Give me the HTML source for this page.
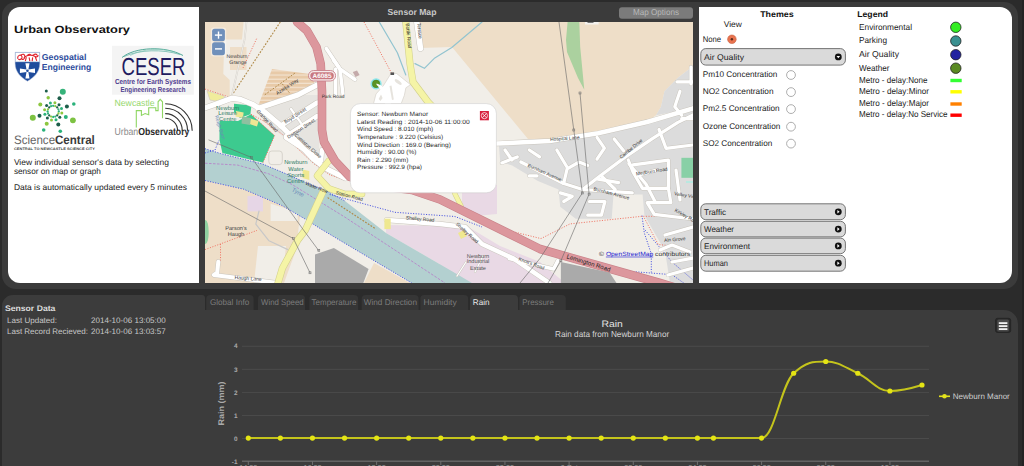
<!DOCTYPE html>
<html><head><meta charset="utf-8"><title>Urban Observatory</title>
<style>
html,body{margin:0;padding:0;background:#2b2b2b;overflow:hidden;width:1024px;height:466px}
svg{display:block;font-family:"Liberation Sans",sans-serif;text-rendering:geometricPrecision}
</style></head><body>
<svg width="1024" height="466" viewBox="0 0 1024 466">
<rect x="0" y="0" width="1024" height="466" fill="#2b2b2b"/>
<rect x="2" y="2" width="1016" height="287" rx="14" fill="#3b3b3b"/>
<path d="M20 7 H199 V283 H20 A12 12 0 0 1 8 271 V19 A12 12 0 0 1 20 7 Z" fill="#fff"/>
<path d="M699 7 H1000 A12 12 0 0 1 1012 19 V271 A12 12 0 0 1 1000 283 H699 Z" fill="#fff"/>
<path d="M13 295 H202 A3 3 0 0 1 205 298 V310 H1004 A14 14 0 0 1 1018 324 V466 H2 V306 A11 11 0 0 1 13 295 Z" fill="#3c3c3c"/>
<rect x="1022" y="0" width="2" height="466" fill="#232323"/>
<text x="14.0" y="32.7" font-size="10.47" fill="#111" font-weight="bold" textLength="116.0" lengthAdjust="spacingAndGlyphs" >Urban Observatory</text>
<text x="13.9" y="164.7" font-size="8.28" fill="#222" textLength="155.0" lengthAdjust="spacingAndGlyphs" >View individual sensor&#x27;s data by selecting</text>
<text x="13.9" y="173.7" font-size="8.28" fill="#222" textLength="86.9" lengthAdjust="spacingAndGlyphs" >sensor on map or graph</text>
<text x="13.9" y="189.6" font-size="8.28" fill="#222" textLength="173.0" lengthAdjust="spacingAndGlyphs" >Data is automatically updated every 5 minutes</text>
<path d="M15.1 52.3 H39.8 V63.5 C39.8 72 34 77.5 27.45 81.2 C21 77.5 15.1 72 15.1 63.5 Z" fill="#1f4c9c" stroke="#b8c4dc" stroke-width="0.5"/>
<rect x="15.4" y="52.6" width="24.1" height="9.2" fill="#ffffff"/>
<path d="M17.6 58.2 C17.6 54.8 21.2 54.2 22 56.6 C22.5 58.6 20.2 60.2 18.6 59.2 M20.8 55.2 C22.8 53.6 25.2 54 24.8 57 C24.4 59.6 22.2 60.2 21.6 58.6 M24.2 57.4 C27.4 54.6 32 54.8 35.2 56.4 C36.6 57.2 37.6 56.8 38.2 55.8 M26.2 57.6 L25.4 60.8 M29.2 57.8 L29.8 60.8 M32.6 57.8 L32.2 60.8 M35.4 57.2 L36.6 60.4 M33.2 55.4 C34.2 53.8 36.2 53.6 37.2 55.2 M27.4 55.6 C28.2 54 30 53.8 31 55" fill="none" stroke="#e0242f" stroke-width="1.15" stroke-linecap="round"/>
<rect x="15.4" y="61.6" width="24.1" height="0.5" fill="#d0d8e8"/>
<path d="M25.4 63.2 H29.5 L28.4 69.4 L35.0 68.4 V73.0 L28.4 72.0 L29.5 78.6 H25.4 L26.5 72.0 L19.9 73.0 V68.4 L26.5 69.4 Z" fill="#ffffff"/>
<circle cx="27.45" cy="70.7" r="1.3" fill="#1f4c9c"/>
<text x="41.8" y="60.0" font-size="8.72" fill="#2d4c9c" font-weight="bold" textLength="44.6" lengthAdjust="spacingAndGlyphs" >Geospatial</text>
<text x="41.8" y="69.8" font-size="8.72" fill="#2d4c9c" font-weight="bold" textLength="49.5" lengthAdjust="spacingAndGlyphs" >Engineering</text>
<rect x="112" y="45.8" width="81.8" height="48.9" fill="#f4f4f4"/>
<path d="M122 57.5 C135 47 165 45.5 183 55.5" fill="none" stroke="#3f9f8c" stroke-width="0.9"/>
<path d="M124 56.5 C140 49.5 162 49 180 54.5" fill="none" stroke="#5ab0a0" stroke-width="0.7"/>
<path d="M130 55.5 C145 48 160 48 175 52" fill="none" stroke="#7cc4b4" stroke-width="0.6"/>
<text x="121.5" y="75.4" font-size="24.71" fill="#211b60" textLength="63.9" lengthAdjust="spacingAndGlyphs" >CESER</text>
<text x="153.0" y="83.8" font-size="7.27" fill="#4e3a8e" font-weight="bold" text-anchor="middle" textLength="76.0" lengthAdjust="spacingAndGlyphs" >Centre for Earth Systems</text>
<text x="153.0" y="91.5" font-size="7.27" fill="#4e3a8e" font-weight="bold" text-anchor="middle" textLength="65.0" lengthAdjust="spacingAndGlyphs" >Engineering Research</text>
<circle cx="46.3" cy="91.0" r="1.5" fill="#1d5e4a"/>
<circle cx="62.8" cy="91.8" r="3" fill="#36b37a"/>
<circle cx="48.2" cy="97.8" r="1.7" fill="#8cc63f"/>
<circle cx="59.5" cy="98.2" r="2" fill="#1d5e4a"/>
<circle cx="73.8" cy="104.0" r="1.8" fill="#2ab27b"/>
<circle cx="40.3" cy="104.5" r="2" fill="#8cc63f"/>
<circle cx="66.9" cy="106.5" r="2" fill="#1d5e4a"/>
<circle cx="32.8" cy="117.7" r="3" fill="#7dc242"/>
<circle cx="39.5" cy="115.8" r="2" fill="#1d5e4a"/>
<circle cx="65.8" cy="117.0" r="2" fill="#2ab27b"/>
<circle cx="72.9" cy="120.3" r="2.9" fill="#7dc242"/>
<circle cx="46.7" cy="123.7" r="2" fill="#8cc63f"/>
<circle cx="58.3" cy="124.5" r="2" fill="#1d5e4a"/>
<circle cx="43.7" cy="130.0" r="1.8" fill="#2ab27b"/>
<circle cx="60.3" cy="131.2" r="1.8" fill="#2ab27b"/>
<circle cx="58.8" cy="111.4" r="1.15" fill="#2ab27b"/>
<circle cx="58.4" cy="113.5" r="1.15" fill="#8cc63f"/>
<circle cx="57.2" cy="115.4" r="1.15" fill="#1d5e4a"/>
<circle cx="55.3" cy="116.6" r="1.15" fill="#36b37a"/>
<circle cx="53.2" cy="117.0" r="1.15" fill="#2ab27b"/>
<circle cx="51.1" cy="116.6" r="1.15" fill="#8cc63f"/>
<circle cx="49.2" cy="115.4" r="1.15" fill="#1d5e4a"/>
<circle cx="48.0" cy="113.5" r="1.15" fill="#36b37a"/>
<circle cx="47.6" cy="111.4" r="1.15" fill="#2ab27b"/>
<circle cx="48.0" cy="109.3" r="1.15" fill="#8cc63f"/>
<circle cx="49.2" cy="107.4" r="1.15" fill="#1d5e4a"/>
<circle cx="51.1" cy="106.2" r="1.15" fill="#36b37a"/>
<circle cx="53.2" cy="105.8" r="1.15" fill="#2ab27b"/>
<circle cx="55.3" cy="106.2" r="1.15" fill="#8cc63f"/>
<circle cx="57.2" cy="107.4" r="1.15" fill="#1d5e4a"/>
<circle cx="58.4" cy="109.3" r="1.15" fill="#36b37a"/>
<circle cx="61.8" cy="113.1" r="1.5" fill="#8cc63f"/>
<circle cx="59.8" cy="117.2" r="1.5" fill="#1d5e4a"/>
<circle cx="56.0" cy="119.7" r="1.5" fill="#2ab27b"/>
<circle cx="51.5" cy="120.0" r="1.5" fill="#8cc63f"/>
<circle cx="47.4" cy="118.0" r="1.5" fill="#1d5e4a"/>
<circle cx="44.9" cy="114.2" r="1.5" fill="#2ab27b"/>
<circle cx="44.6" cy="109.7" r="1.5" fill="#8cc63f"/>
<circle cx="46.6" cy="105.6" r="1.5" fill="#1d5e4a"/>
<circle cx="50.4" cy="103.1" r="1.5" fill="#2ab27b"/>
<circle cx="54.9" cy="102.8" r="1.5" fill="#8cc63f"/>
<circle cx="59.0" cy="104.8" r="1.5" fill="#1d5e4a"/>
<circle cx="61.5" cy="108.6" r="1.5" fill="#2ab27b"/>
<text x="14" y="144.3" font-size="12.3" fill="#555" textLength="80.8" lengthAdjust="spacingAndGlyphs"><tspan font-weight="normal" fill="#666">Science</tspan><tspan font-weight="bold" fill="#3a3a3a">Central</tspan></text>
<text x="14.0" y="149.6" font-size="3.49" fill="#444" font-weight="bold" textLength="80.8" lengthAdjust="spacingAndGlyphs" >CENTRAL TO NEWCASTLE SCIENCE CITY</text>
<text x="114.5" y="105.6" font-size="9.01" fill="#96d86e" textLength="40.1" lengthAdjust="spacingAndGlyphs" >Newcastle</text>
<polyline points="136.3,127.5 136.3,110.6 141.4,110.6 141.4,115.4 145.1,113.6 148.7,114.8 148.7,107.7 155.8,107.7 155.8,110.6 158.1,110.6 158.1,101.8 160.2,99.4 162.5,101.8 162.5,118.3" fill="none" stroke="#8fd663" stroke-width="1.1"/>
<path d="M165.2 118.3 A12.4 12.4 0 0 1 177.6 130.7" fill="none" stroke="#333" stroke-width="1.1"/>
<path d="M165.2 113.6 A17.1 17.1 0 0 1 182.3 130.7" fill="none" stroke="#333" stroke-width="1.1"/>
<path d="M165.2 108.3 A22.4 22.4 0 0 1 187.6 130.7" fill="none" stroke="#333" stroke-width="1.1"/>
<path d="M165.2 103.7 A27.0 27.0 0 0 1 192.2 130.7" fill="none" stroke="#333" stroke-width="1.1"/>
<text x="114.5" y="134.8" font-size="10.2" fill="#444" textLength="74.9" lengthAdjust="spacingAndGlyphs"><tspan fill="#8a8a8a">Urban</tspan><tspan font-weight="bold" fill="#2a2a2a">Observatory</tspan></text>
<text x="387.6" y="14.5" font-size="8.72" fill="#c8c8c8" font-weight="bold" textLength="48.8" lengthAdjust="spacingAndGlyphs" >Sensor Map</text>
<rect x="619" y="7.3" width="74" height="11.5" rx="3" fill="#7b7b7b"/>
<text x="633.0" y="14.5" font-size="8.58" fill="#b8b8b8" textLength="46.0" lengthAdjust="spacingAndGlyphs" >Map Options</text>
<defs><clipPath id="mapclip"><rect x="205" y="22" width="488" height="261"/></clipPath><pattern id="hatch" patternUnits="userSpaceOnUse" width="6" height="4.2"><rect width="6" height="4.2" fill="#e8caa8"/><rect y="3.0" width="6" height="1.2" fill="#f2e2cf"/></pattern></defs>
<g clip-path="url(#mapclip)">
<rect x="205" y="22" width="488" height="261" fill="#f1eee8"/>
<polygon points="205.0,22.0 243.6,22.0 242.0,39.4 224.3,39.4 223.3,74.0 229.7,80.0 229.7,97.2 205.0,89.1" fill="#eedec8" />
<polygon points="230.0,47.0 246.5,47.0 246.5,70.0 230.0,70.0" fill="#eedec8" />
<polygon points="420.0,22.0 693.0,22.0 693.0,66.3 678.2,77.5 664.5,91.2 661.0,106.7 656.0,115.2 647.0,122.0 598.0,133.3 546.0,141.0 528.0,139.0 452.0,47.0 420.0,48.0" fill="#eedec8" />
<polygon points="205.0,180.5 243.6,189.2 282.2,205.6 300.0,216.0 296.0,250.0 284.0,283.0 205.0,283.0" fill="#eedec8" />
<polygon points="258.0,246.0 286.0,246.0 282.0,283.0 254.0,283.0" fill="#f1eee8" />
<polygon points="270.6,203.7 297.7,212.0 297.7,221.0 270.6,221.0" fill="#f1eee8" />
<polygon points="374.0,263.0 410.0,283.0 364.0,283.0" fill="#eedec8" />
<polygon points="499.0,146.0 546.0,143.0 598.0,135.0 648.0,124.0 693.0,110.0 693.0,283.0 670.0,283.0 665.0,251.0 644.4,215.2 642.6,194.6 613.5,194.6 611.7,218.7 575.7,218.7 560.2,206.7 558.5,189.5 537.9,180.9 512.2,165.5 500.2,162.0" fill="#dcdcdc" />
<polygon points="693.0,66.3 678.2,77.5 664.5,91.2 661.0,106.7 656.0,115.2 693.0,108.0" fill="#dcdcdc" />
<polygon points="257.0,109.0 297.0,95.0 319.0,95.0 319.0,160.0 306.0,150.0 286.0,139.0 270.0,126.0" fill="#e6e4e0" />
<polygon points="462.0,185.0 497.0,185.0 497.0,214.0 475.0,216.0 462.0,212.0" fill="#e9d9e5" />
<polygon points="440.0,222.0 470.0,228.0 500.0,246.0 540.0,262.0 565.0,283.0 440.0,283.0" fill="#e9d9e5" />
<polygon points="386.0,225.0 455.0,226.0 455.0,273.0 386.0,233.0" fill="#e9d9e5" />
<polygon points="247.5,196.0 263.0,196.0 263.0,211.4 247.5,211.4" fill="#e6d6e6" />
<polygon points="219.5,121.0 238.0,121.0 251.0,114.3 274.6,135.6 263.0,162.6 222.4,153.0 219.5,140.0" fill="#3dca8f" />
<polygon points="234.0,103.7 251.4,105.5 250.4,114.3 240.0,118.0 234.0,112.0" fill="#3dca8f" />
<polygon points="236.0,111.0 243.6,112.5 243.0,118.0 235.5,116.5" fill="#eee694" />
<polygon points="250.5,118.6 258.6,121.0 257.0,126.6 249.5,124.0" fill="#eee694" />
<polygon points="242.0,116.5 251.0,118.0 250.0,125.0 241.5,123.5" fill="#8fc0a0" />
<polygon points="207.0,90.7 224.3,96.0 224.3,102.5 210.0,100.0" fill="#f0ec9c" stroke="#d8d0c0" stroke-width="0.8"/>
<ellipse cx="205.5" cy="232" rx="3.2" ry="12" fill="#8fd0a0"/>
<polygon points="681.4,157.8 693.0,157.8 693.0,177.8 681.4,177.8" fill="#88d0a6" />
<polygon points="686.0,181.0 693.0,181.0 693.0,183.0 686.0,183.0" fill="#b8e8e0" />
<polygon points="205.0,148.7 220.4,153.5 262.9,164.1 286.0,173.8 305.4,182.5 328.6,192.1 345.0,201.0 386.0,233.0 455.0,273.0 472.0,283.0 411.7,283.0 320.9,229.0 305.4,219.2 282.2,205.6 243.6,189.2 205.0,180.5" fill="#b3d0d0" />
<polyline points="205.0,163.2 237.8,165.1 268.7,173.8 291.9,184.4 345.0,217.2 445.0,283.0" fill="none" stroke="#b585c8" stroke-width="0.9" stroke-linejoin="round" stroke-linecap="butt" stroke-dasharray="2.6 1.4"/>
<polyline points="205.0,148.7 220.4,153.5 262.9,164.1 286.0,173.8 305.4,182.5 328.6,192.1 345.0,201.0" fill="none" stroke="#4a55e0" stroke-width="1.0" stroke-linejoin="round" stroke-dasharray="1.1 1.5" stroke-linecap="butt"/>
<polyline points="205.0,180.5 243.6,189.2 282.2,205.6 305.4,219.2 320.9,229.0 411.7,283.0" fill="none" stroke="#4a55e0" stroke-width="1.0" stroke-linejoin="round" stroke-dasharray="1.1 1.5" stroke-linecap="butt"/>
<polyline points="329.7,194.5 394.9,212.3 455.0,216.5 482.0,227.0" fill="none" stroke="#4a55e0" stroke-width="1.0" stroke-linejoin="round" stroke-dasharray="1.1 1.5" stroke-linecap="butt"/>
<polyline points="205.0,153.0 215.0,150.0 219.0,140.0" fill="none" stroke="#4a55e0" stroke-width="1.0" stroke-linejoin="round" stroke-dasharray="1.1 1.5" stroke-linecap="butt"/>
<polyline points="642.0,215.6 644.3,233.0 651.3,253.8 651.3,272.4" fill="none" stroke="#4a55e0" stroke-width="1.0" stroke-linejoin="round" stroke-dasharray="1.1 1.5" stroke-linecap="butt"/>
<polyline points="628.0,271.2 672.0,274.7 683.7,283.0" fill="none" stroke="#4a55e0" stroke-width="1.0" stroke-linejoin="round" stroke-dasharray="1.1 1.5" stroke-linecap="butt"/>
<polyline points="645.0,230.0 672.0,262.0 693.0,280.0" fill="none" stroke="#4a55e0" stroke-width="1.0" stroke-linejoin="round" stroke-dasharray="1.1 1.5" stroke-linecap="butt"/>
<polyline points="256.6,38.7 243.0,68.0" fill="none" stroke="#f07a6a" stroke-width="1.0" stroke-linejoin="round" stroke-dasharray="1.1 1.5" stroke-linecap="butt"/>
<polyline points="364.0,22.0 391.8,73.6" fill="none" stroke="#f07a6a" stroke-width="1.0" stroke-linejoin="round" stroke-dasharray="1.1 1.5" stroke-linecap="butt"/>
<polyline points="205.0,89.1 229.7,97.2" fill="none" stroke="#f07a6a" stroke-width="1.0" stroke-linejoin="round" stroke-dasharray="1.1 1.5" stroke-linecap="butt"/>
<polyline points="251.0,114.3 262.0,120.0 282.0,134.0 313.0,163.0 330.0,175.0 345.0,180.0" fill="none" stroke="#f07a6a" stroke-width="1.0" stroke-linejoin="round" stroke-dasharray="1.1 1.5" stroke-linecap="butt"/>
<polyline points="263.0,162.6 274.6,135.6 251.0,114.3" fill="none" stroke="#f07a6a" stroke-width="1.0" stroke-linejoin="round" stroke-dasharray="1.1 1.5" stroke-linecap="butt"/>
<polyline points="205.0,249.6 257.0,230.4" fill="none" stroke="#f07a6a" stroke-width="1.0" stroke-linejoin="round" stroke-dasharray="1.1 1.5" stroke-linecap="butt"/>
<polyline points="220.5,244.0 220.5,261.8" fill="none" stroke="#f07a6a" stroke-width="1.0" stroke-linejoin="round" stroke-dasharray="1.1 1.5" stroke-linecap="butt"/>
<polyline points="461.0,208.0 503.0,229.2 541.0,238.6 570.0,223.9 642.0,216.3 669.8,216.3" fill="none" stroke="#f07a6a" stroke-width="1.0" stroke-linejoin="round" stroke-dasharray="1.1 1.5" stroke-linecap="butt"/>
<polyline points="644.3,217.9 658.2,244.5 669.8,245.7" fill="none" stroke="#f07a6a" stroke-width="1.0" stroke-linejoin="round" stroke-dasharray="1.1 1.5" stroke-linecap="butt"/>
<polyline points="280.3,22.0 231.5,95.9" fill="none" stroke="#b08a4a" stroke-width="1.1" stroke-linejoin="round" stroke-linecap="butt" stroke-dasharray="1.8 1.4"/>
<polyline points="327.6,197.6 376.0,229.0" fill="none" stroke="#b08a4a" stroke-width="1.1" stroke-linejoin="round" stroke-linecap="butt" stroke-dasharray="1.8 1.4"/>
<polygon points="272.0,69.0 310.0,74.0 316.0,86.0 270.0,103.0 257.0,109.0" fill="url(#hatch)" />
<polyline points="294.8,73.2 263.9,95.4" fill="none" stroke="#b08a4a" stroke-width="1.0" stroke-linejoin="round" stroke-linecap="butt" stroke-dasharray="1.8 1.4"/>
<polyline points="282.2,83.8 290.0,93.5" fill="none" stroke="#b08a4a" stroke-width="1.0" stroke-linejoin="round" stroke-linecap="butt" stroke-dasharray="1.8 1.4"/>
<polyline points="482.0,22.0 451.8,47.5 434.8,57.9 424.4,68.3 415.0,63.6" fill="none" stroke="#92c4d0" stroke-width="1.2" stroke-linejoin="round" stroke-linecap="round" />
<polyline points="379.3,22.0 397.4,52.7 405.8,75.0" fill="none" stroke="#92c4d0" stroke-width="1.2" stroke-linejoin="round" stroke-linecap="round" />
<polyline points="246.5,22.0 244.6,39.4 232.0,95.0" fill="none" stroke="#d0ccc4" stroke-width="1.6" stroke-linejoin="round" stroke-linecap="round" />
<polyline points="246.5,22.0 244.6,39.4 232.0,95.0" fill="none" stroke="#f6f4f0" stroke-width="0.8" stroke-linejoin="round" stroke-linecap="round" />
<polyline points="259.0,211.0 255.8,224.2 269.0,240.8 287.9,249.6" fill="none" stroke="#c8c8c8" stroke-width="1.2" stroke-linejoin="round" stroke-linecap="round" />
<rect x="268.8" y="151" width="13.5" height="13.6" rx="3" fill="none" stroke="#d4d0c8" stroke-width="0.9"/>
<polyline points="205.0,107.9 219.0,103.0 231.8,98.2 240.4,99.3 253.3,104.7 265.0,112.2 282.3,127.0 300.0,145.0 313.0,158.8 325.0,168.0 345.0,178.0" fill="none" stroke="#c9c5bd" stroke-width="6.1000000000000005" stroke-linejoin="round" stroke-linecap="round" />
<polyline points="258.0,108.4 297.8,95.0 317.0,85.0" fill="none" stroke="#c9c5bd" stroke-width="6.1000000000000005" stroke-linejoin="round" stroke-linecap="round" />
<polyline points="280.4,126.0 317.0,102.7" fill="none" stroke="#c9c5bd" stroke-width="5.7" stroke-linejoin="round" stroke-linecap="round" />
<polyline points="286.0,136.5 317.0,116.3" fill="none" stroke="#c9c5bd" stroke-width="5.7" stroke-linejoin="round" stroke-linecap="round" />
<polyline points="291.0,109.0 296.0,116.0 301.0,123.0" fill="none" stroke="#c9c5bd" stroke-width="3.1" stroke-linejoin="round" stroke-linecap="round" />
<polyline points="286.0,137.5 321.0,160.7 322.0,150.0" fill="none" stroke="#c9c5bd" stroke-width="5.5" stroke-linejoin="round" stroke-linecap="round" />
<polyline points="326.3,48.5 340.0,69.0 355.0,79.5" fill="none" stroke="#c9c5bd" stroke-width="4.5" stroke-linejoin="round" stroke-linecap="round" />
<polyline points="335.6,69.0 335.6,94.6" fill="none" stroke="#c9c5bd" stroke-width="4.3" stroke-linejoin="round" stroke-linecap="round" />
<polyline points="340.0,69.0 343.0,94.6" fill="none" stroke="#c9c5bd" stroke-width="4.3" stroke-linejoin="round" stroke-linecap="round" />
<polyline points="333.3,60.0 340.0,69.0" fill="none" stroke="#c9c5bd" stroke-width="4.3" stroke-linejoin="round" stroke-linecap="round" />
<polyline points="416.5,20.0 420.5,48.5" fill="none" stroke="#c9c5bd" stroke-width="6.4" stroke-linejoin="round" stroke-linecap="round" />
<polyline points="496.8,143.6 549.7,141.0 598.0,133.3 647.0,122.0 693.0,108.4" fill="none" stroke="#c9c5bd" stroke-width="5.4" stroke-linejoin="round" stroke-linecap="round" />
<polyline points="386.5,220.0 440.0,224.0 465.2,227.0 482.0,244.0 513.6,258.6 549.4,283.0" fill="none" stroke="#c9c5bd" stroke-width="5.4" stroke-linejoin="round" stroke-linecap="round" />
<polyline points="218.3,261.8 217.2,272.8 213.8,275.0 278.0,283.0" fill="none" stroke="#c9c5bd" stroke-width="4.9" stroke-linejoin="round" stroke-linecap="round" />
<polyline points="509.4,258.6 553.6,269.0 557.8,260.7" fill="none" stroke="#c9c5bd" stroke-width="4.4" stroke-linejoin="round" stroke-linecap="round" />
<polyline points="483.0,256.0 475.0,272.0" fill="none" stroke="#c9c5bd" stroke-width="2.1" stroke-linejoin="round" stroke-linecap="round" />
<polyline points="466.0,262.0 457.0,276.0" fill="none" stroke="#c9c5bd" stroke-width="2.1" stroke-linejoin="round" stroke-linecap="round" />
<polyline points="501.9,162.9 517.3,156.9" fill="none" stroke="#c9c5bd" stroke-width="4.1000000000000005" stroke-linejoin="round" stroke-linecap="round" />
<polyline points="520.8,162.0 563.7,183.5 582.6,189.5 632.3,192.9" fill="none" stroke="#c9c5bd" stroke-width="4.1000000000000005" stroke-linejoin="round" stroke-linecap="round" />
<polyline points="563.7,183.5 567.1,168.9 579.1,162.0 587.7,165.5" fill="none" stroke="#c9c5bd" stroke-width="4.1000000000000005" stroke-linejoin="round" stroke-linecap="round" />
<polyline points="582.6,189.5 598.0,177.5 625.5,156.9 652.0,138.9 677.9,122.4 693.0,115.0" fill="none" stroke="#c9c5bd" stroke-width="4.1000000000000005" stroke-linejoin="round" stroke-linecap="round" />
<polyline points="560.2,192.9 572.3,196.4 563.7,201.5" fill="none" stroke="#c9c5bd" stroke-width="4.1000000000000005" stroke-linejoin="round" stroke-linecap="round" />
<polyline points="589.4,201.5 604.9,201.5 601.4,215.2 587.7,215.2" fill="none" stroke="#c9c5bd" stroke-width="4.1000000000000005" stroke-linejoin="round" stroke-linecap="round" />
<polyline points="598.0,179.2 618.6,182.6" fill="none" stroke="#c9c5bd" stroke-width="4.1000000000000005" stroke-linejoin="round" stroke-linecap="round" />
<polyline points="601.4,175.8 615.2,189.5" fill="none" stroke="#c9c5bd" stroke-width="4.1000000000000005" stroke-linejoin="round" stroke-linecap="round" />
<polyline points="529.3,150.0 539.6,156.9" fill="none" stroke="#c9c5bd" stroke-width="4.1000000000000005" stroke-linejoin="round" stroke-linecap="round" />
<polyline points="556.8,150.0 567.1,167.2" fill="none" stroke="#c9c5bd" stroke-width="4.1000000000000005" stroke-linejoin="round" stroke-linecap="round" />
<polyline points="529.3,175.8 537.0,175.8" fill="none" stroke="#c9c5bd" stroke-width="4.1000000000000005" stroke-linejoin="round" stroke-linecap="round" />
<polyline points="505.0,150.0 512.0,160.0" fill="none" stroke="#c9c5bd" stroke-width="4.1000000000000005" stroke-linejoin="round" stroke-linecap="round" />
<polyline points="597.0,137.3 604.4,148.2 597.0,159.2" fill="none" stroke="#c9c5bd" stroke-width="4.1000000000000005" stroke-linejoin="round" stroke-linecap="round" />
<polyline points="628.9,163.7 646.1,184.3 655.0,201.5" fill="none" stroke="#c9c5bd" stroke-width="4.1000000000000005" stroke-linejoin="round" stroke-linecap="round" />
<polyline points="635.8,175.8 655.0,170.6" fill="none" stroke="#c9c5bd" stroke-width="4.1000000000000005" stroke-linejoin="round" stroke-linecap="round" />
<polyline points="628.3,160.0 633.0,172.0 642.5,188.4 668.4,188.4 668.4,160.1 633.0,164.8" fill="none" stroke="#c9c5bd" stroke-width="4.1000000000000005" stroke-linejoin="round" stroke-linecap="round" />
<polyline points="668.4,188.4 670.8,202.6 647.2,202.6 654.3,214.4 693.0,219.0" fill="none" stroke="#c9c5bd" stroke-width="4.1000000000000005" stroke-linejoin="round" stroke-linecap="round" />
<polyline points="659.0,129.4 666.0,148.3 693.0,145.0" fill="none" stroke="#c9c5bd" stroke-width="4.1000000000000005" stroke-linejoin="round" stroke-linecap="round" />
<polyline points="614.2,138.9 623.6,150.7" fill="none" stroke="#c9c5bd" stroke-width="4.1000000000000005" stroke-linejoin="round" stroke-linecap="round" />
<polyline points="691.0,67.0 691.0,84.0" fill="none" stroke="#c9c5bd" stroke-width="4.1000000000000005" stroke-linejoin="round" stroke-linecap="round" />
<polyline points="677.0,81.8 693.0,81.8" fill="none" stroke="#c9c5bd" stroke-width="4.1000000000000005" stroke-linejoin="round" stroke-linecap="round" />
<polyline points="680.0,91.2 676.5,101.5 674.8,106.7 681.7,115.2" fill="none" stroke="#c9c5bd" stroke-width="4.1000000000000005" stroke-linejoin="round" stroke-linecap="round" />
<polyline points="681.7,118.7 693.0,118.7" fill="none" stroke="#c9c5bd" stroke-width="4.1000000000000005" stroke-linejoin="round" stroke-linecap="round" />
<polyline points="676.0,170.0 680.0,200.0" fill="none" stroke="#c9c5bd" stroke-width="4.1000000000000005" stroke-linejoin="round" stroke-linecap="round" />
<polyline points="665.0,235.0 693.0,227.0" fill="none" stroke="#c9c5bd" stroke-width="4.1000000000000005" stroke-linejoin="round" stroke-linecap="round" />
<polyline points="660.0,250.0 672.0,245.0 690.0,252.0" fill="none" stroke="#c9c5bd" stroke-width="4.1000000000000005" stroke-linejoin="round" stroke-linecap="round" />
<polyline points="672.0,262.0 693.0,258.0" fill="none" stroke="#c9c5bd" stroke-width="4.1000000000000005" stroke-linejoin="round" stroke-linecap="round" />
<polyline points="668.0,275.0 693.0,268.0" fill="none" stroke="#c9c5bd" stroke-width="4.1000000000000005" stroke-linejoin="round" stroke-linecap="round" />
<polyline points="205.0,107.9 219.0,103.0 231.8,98.2 240.4,99.3 253.3,104.7 265.0,112.2 282.3,127.0 300.0,145.0 313.0,158.8 325.0,168.0 345.0,178.0" fill="none" stroke="#ffffff" stroke-width="5.2" stroke-linejoin="round" stroke-linecap="round" />
<polyline points="258.0,108.4 297.8,95.0 317.0,85.0" fill="none" stroke="#ffffff" stroke-width="5.2" stroke-linejoin="round" stroke-linecap="round" />
<polyline points="280.4,126.0 317.0,102.7" fill="none" stroke="#ffffff" stroke-width="4.8" stroke-linejoin="round" stroke-linecap="round" />
<polyline points="286.0,136.5 317.0,116.3" fill="none" stroke="#ffffff" stroke-width="4.8" stroke-linejoin="round" stroke-linecap="round" />
<polyline points="291.0,109.0 296.0,116.0 301.0,123.0" fill="none" stroke="#ffffff" stroke-width="2.2" stroke-linejoin="round" stroke-linecap="round" />
<polyline points="286.0,137.5 321.0,160.7 322.0,150.0" fill="none" stroke="#ffffff" stroke-width="4.6" stroke-linejoin="round" stroke-linecap="round" />
<polyline points="326.3,48.5 340.0,69.0 355.0,79.5" fill="none" stroke="#ffffff" stroke-width="3.6" stroke-linejoin="round" stroke-linecap="round" />
<polyline points="335.6,69.0 335.6,94.6" fill="none" stroke="#ffffff" stroke-width="3.4" stroke-linejoin="round" stroke-linecap="round" />
<polyline points="340.0,69.0 343.0,94.6" fill="none" stroke="#ffffff" stroke-width="3.4" stroke-linejoin="round" stroke-linecap="round" />
<polyline points="333.3,60.0 340.0,69.0" fill="none" stroke="#ffffff" stroke-width="3.4" stroke-linejoin="round" stroke-linecap="round" />
<polyline points="416.5,20.0 420.5,48.5" fill="none" stroke="#ffffff" stroke-width="5.5" stroke-linejoin="round" stroke-linecap="round" />
<polyline points="496.8,143.6 549.7,141.0 598.0,133.3 647.0,122.0 693.0,108.4" fill="none" stroke="#ffffff" stroke-width="4.5" stroke-linejoin="round" stroke-linecap="round" />
<polyline points="386.5,220.0 440.0,224.0 465.2,227.0 482.0,244.0 513.6,258.6 549.4,283.0" fill="none" stroke="#ffffff" stroke-width="4.5" stroke-linejoin="round" stroke-linecap="round" />
<polyline points="218.3,261.8 217.2,272.8 213.8,275.0 278.0,283.0" fill="none" stroke="#ffffff" stroke-width="4.0" stroke-linejoin="round" stroke-linecap="round" />
<polyline points="509.4,258.6 553.6,269.0 557.8,260.7" fill="none" stroke="#ffffff" stroke-width="3.5" stroke-linejoin="round" stroke-linecap="round" />
<polyline points="483.0,256.0 475.0,272.0" fill="none" stroke="#ffffff" stroke-width="1.2" stroke-linejoin="round" stroke-linecap="round" />
<polyline points="466.0,262.0 457.0,276.0" fill="none" stroke="#ffffff" stroke-width="1.2" stroke-linejoin="round" stroke-linecap="round" />
<polyline points="501.9,162.9 517.3,156.9" fill="none" stroke="#ffffff" stroke-width="3.2" stroke-linejoin="round" stroke-linecap="round" />
<polyline points="520.8,162.0 563.7,183.5 582.6,189.5 632.3,192.9" fill="none" stroke="#ffffff" stroke-width="3.2" stroke-linejoin="round" stroke-linecap="round" />
<polyline points="563.7,183.5 567.1,168.9 579.1,162.0 587.7,165.5" fill="none" stroke="#ffffff" stroke-width="3.2" stroke-linejoin="round" stroke-linecap="round" />
<polyline points="582.6,189.5 598.0,177.5 625.5,156.9 652.0,138.9 677.9,122.4 693.0,115.0" fill="none" stroke="#ffffff" stroke-width="3.2" stroke-linejoin="round" stroke-linecap="round" />
<polyline points="560.2,192.9 572.3,196.4 563.7,201.5" fill="none" stroke="#ffffff" stroke-width="3.2" stroke-linejoin="round" stroke-linecap="round" />
<polyline points="589.4,201.5 604.9,201.5 601.4,215.2 587.7,215.2" fill="none" stroke="#ffffff" stroke-width="3.2" stroke-linejoin="round" stroke-linecap="round" />
<polyline points="598.0,179.2 618.6,182.6" fill="none" stroke="#ffffff" stroke-width="3.2" stroke-linejoin="round" stroke-linecap="round" />
<polyline points="601.4,175.8 615.2,189.5" fill="none" stroke="#ffffff" stroke-width="3.2" stroke-linejoin="round" stroke-linecap="round" />
<polyline points="529.3,150.0 539.6,156.9" fill="none" stroke="#ffffff" stroke-width="3.2" stroke-linejoin="round" stroke-linecap="round" />
<polyline points="556.8,150.0 567.1,167.2" fill="none" stroke="#ffffff" stroke-width="3.2" stroke-linejoin="round" stroke-linecap="round" />
<polyline points="529.3,175.8 537.0,175.8" fill="none" stroke="#ffffff" stroke-width="3.2" stroke-linejoin="round" stroke-linecap="round" />
<polyline points="505.0,150.0 512.0,160.0" fill="none" stroke="#ffffff" stroke-width="3.2" stroke-linejoin="round" stroke-linecap="round" />
<polyline points="597.0,137.3 604.4,148.2 597.0,159.2" fill="none" stroke="#ffffff" stroke-width="3.2" stroke-linejoin="round" stroke-linecap="round" />
<polyline points="628.9,163.7 646.1,184.3 655.0,201.5" fill="none" stroke="#ffffff" stroke-width="3.2" stroke-linejoin="round" stroke-linecap="round" />
<polyline points="635.8,175.8 655.0,170.6" fill="none" stroke="#ffffff" stroke-width="3.2" stroke-linejoin="round" stroke-linecap="round" />
<polyline points="628.3,160.0 633.0,172.0 642.5,188.4 668.4,188.4 668.4,160.1 633.0,164.8" fill="none" stroke="#ffffff" stroke-width="3.2" stroke-linejoin="round" stroke-linecap="round" />
<polyline points="668.4,188.4 670.8,202.6 647.2,202.6 654.3,214.4 693.0,219.0" fill="none" stroke="#ffffff" stroke-width="3.2" stroke-linejoin="round" stroke-linecap="round" />
<polyline points="659.0,129.4 666.0,148.3 693.0,145.0" fill="none" stroke="#ffffff" stroke-width="3.2" stroke-linejoin="round" stroke-linecap="round" />
<polyline points="614.2,138.9 623.6,150.7" fill="none" stroke="#ffffff" stroke-width="3.2" stroke-linejoin="round" stroke-linecap="round" />
<polyline points="691.0,67.0 691.0,84.0" fill="none" stroke="#ffffff" stroke-width="3.2" stroke-linejoin="round" stroke-linecap="round" />
<polyline points="677.0,81.8 693.0,81.8" fill="none" stroke="#ffffff" stroke-width="3.2" stroke-linejoin="round" stroke-linecap="round" />
<polyline points="680.0,91.2 676.5,101.5 674.8,106.7 681.7,115.2" fill="none" stroke="#ffffff" stroke-width="3.2" stroke-linejoin="round" stroke-linecap="round" />
<polyline points="681.7,118.7 693.0,118.7" fill="none" stroke="#ffffff" stroke-width="3.2" stroke-linejoin="round" stroke-linecap="round" />
<polyline points="676.0,170.0 680.0,200.0" fill="none" stroke="#ffffff" stroke-width="3.2" stroke-linejoin="round" stroke-linecap="round" />
<polyline points="665.0,235.0 693.0,227.0" fill="none" stroke="#ffffff" stroke-width="3.2" stroke-linejoin="round" stroke-linecap="round" />
<polyline points="660.0,250.0 672.0,245.0 690.0,252.0" fill="none" stroke="#ffffff" stroke-width="3.2" stroke-linejoin="round" stroke-linecap="round" />
<polyline points="672.0,262.0 693.0,258.0" fill="none" stroke="#ffffff" stroke-width="3.2" stroke-linejoin="round" stroke-linecap="round" />
<polyline points="668.0,275.0 693.0,268.0" fill="none" stroke="#ffffff" stroke-width="3.2" stroke-linejoin="round" stroke-linecap="round" />
<polygon points="391.2,73.1 396.6,73.5 410.5,84.7 405.9,87.8 404.3,95.5 401.2,103.6 373.5,103.6 376.0,94.0 383.5,85.5" fill="#ffffff" stroke="#d2cdc5" stroke-width="0.6"/>
<ellipse cx="398.2" cy="82" rx="4.2" ry="1.6" transform="rotate(38 398.2 82)" fill="#e6e3dd"/>
<polygon points="389.5,86.0 391.5,85.5 393.8,99.5 392.0,100.0" fill="#e6e3dd" />
<polygon points="378.6,99.0 381.0,94.5 382.6,98.0 380.5,101.0" fill="#e6e3dd" />
<rect x="390.5" y="72.4" width="3.6" height="2.6" fill="#555"/>
<polyline points="405.8,22.0 410.0,63.8 413.0,82.0 428.0,102.0 450.0,125.0 470.0,150.0" fill="none" stroke="#d2d08c" stroke-width="7.1" stroke-linejoin="round" stroke-linecap="round" />
<polyline points="405.8,22.0 410.0,63.8 413.0,82.0 428.0,102.0 450.0,125.0 470.0,150.0" fill="none" stroke="#f5f4a6" stroke-width="6" stroke-linejoin="round" stroke-linecap="round" />
<polyline points="328.6,161.0 317.0,175.7 328.6,188.3 345.0,194.0 362.0,194.0" fill="none" stroke="#d2d08c" stroke-width="6.6" stroke-linejoin="round" stroke-linecap="round" />
<polyline points="328.6,161.0 317.0,175.7 328.6,188.3 345.0,194.0 362.0,194.0" fill="none" stroke="#f5f4a6" stroke-width="5.5" stroke-linejoin="round" stroke-linecap="round" />
<polyline points="322.8,192.1 305.4,230.0 297.8,240.0 282.3,268.4 278.0,283.0" fill="none" stroke="#d2d08c" stroke-width="7.1" stroke-linejoin="round" stroke-linecap="round" />
<polyline points="322.8,192.1 305.4,230.0 297.8,240.0 282.3,268.4 278.0,283.0" fill="none" stroke="#f5f4a6" stroke-width="6" stroke-linejoin="round" stroke-linecap="round" />
<polyline points="454.7,193.4 461.0,206.0" fill="none" stroke="#d2d08c" stroke-width="5.1" stroke-linejoin="round" stroke-linecap="round" />
<polyline points="454.7,193.4 461.0,206.0" fill="none" stroke="#f5f4a6" stroke-width="4" stroke-linejoin="round" stroke-linecap="round" />
<polygon points="302.6,169.4 309.3,171.0 309.3,180.0 302.6,178.0" fill="#efe890" />
<polygon points="384.4,218.6 390.7,218.6 390.7,229.1 384.4,229.1" fill="#efe890" />
<polygon points="458.0,233.0 464.0,230.0 467.0,236.0 461.0,239.0" fill="#efe890" />
<polyline points="297.0,22.0 306.8,30.4 316.5,47.1 320.7,63.8 322.0,91.7 322.0,130.0 324.0,142.0 335.0,161.0 350.0,177.0 380.0,186.0 412.0,190.0 440.0,199.5 540.0,249.0 660.0,283.0 700.0,295.0" fill="none" stroke="#c98289" stroke-width="8.6" stroke-linejoin="round" stroke-linecap="round" />
<polyline points="297.0,22.0 306.8,30.4 316.5,47.1 320.7,63.8 322.0,91.7 322.0,130.0 324.0,142.0 335.0,161.0 350.0,177.0 380.0,186.0 412.0,190.0 440.0,199.5 540.0,249.0 660.0,283.0 700.0,295.0" fill="none" stroke="#dc979d" stroke-width="7.4" stroke-linejoin="round" stroke-linecap="round" />
<polygon points="352.8,72.0 357.0,70.5 359.6,75.0 355.5,77.0" fill="#c4aaaa" />
<polygon points="315.0,254.4 333.9,248.0 368.6,269.0 363.3,283.0 315.0,283.0" fill="#aaaaaa" />
<polygon points="560.9,262.0 609.5,272.4 616.5,283.0 560.9,283.0" fill="#aaaaaa" />
<polygon points="567.6,22.0 579.3,22.0 580.2,47.0 584.3,89.8 578.0,78.0 567.0,52.0 566.0,40.0" fill="#abd19f" />
<rect x="585" y="21" width="13.6" height="3.5" fill="#f4f2ee"/><rect x="587.5" y="21" width="6" height="2" fill="#777"/>
<polyline points="208.9,140.0 251.3,157.4 303.5,230.0 318.8,250.7" fill="none" stroke="#666666" stroke-width="0.6" stroke-linejoin="round" stroke-linecap="round" />
<polyline points="205.0,191.0 293.4,238.6 310.0,272.8" fill="none" stroke="#666666" stroke-width="0.6" stroke-linejoin="round" stroke-linecap="round" />
<polyline points="559.0,22.0 573.8,130.0 582.4,193.0 540.0,258.4 520.0,283.0" fill="none" stroke="#666666" stroke-width="0.6" stroke-linejoin="round" stroke-linecap="round" />
<polyline points="580.0,93.0 589.1,194.1 560.9,260.8 548.0,283.0" fill="none" stroke="#666666" stroke-width="0.6" stroke-linejoin="round" stroke-linecap="round" />
<rect x="250.3" y="156.4" width="2" height="2" fill="none" stroke="#666" stroke-width="0.5"/>
<rect x="292.4" y="237.6" width="2" height="2" fill="none" stroke="#666" stroke-width="0.5"/>
<rect x="309" y="271.8" width="2" height="2" fill="none" stroke="#666" stroke-width="0.5"/>
<rect x="317.8" y="249.7" width="2" height="2" fill="none" stroke="#666" stroke-width="0.5"/>
<rect x="572.8" y="129" width="2" height="2" fill="none" stroke="#666" stroke-width="0.5"/>
<rect x="581.4" y="192" width="2" height="2" fill="none" stroke="#666" stroke-width="0.5"/>
<rect x="588.1" y="193.1" width="2" height="2" fill="none" stroke="#666" stroke-width="0.5"/>
<rect x="579" y="92" width="2" height="2" fill="none" stroke="#666" stroke-width="0.5"/>
<rect x="559.9" y="259.8" width="2" height="2" fill="none" stroke="#666" stroke-width="0.5"/>
<text x="237" y="58" font-size="5.2" fill="#444" text-anchor="middle">Newburn</text>
<text x="238" y="64" font-size="5.2" fill="#444" text-anchor="middle">Grange</text>
<text x="227.7" y="109.5" font-size="5.8" fill="#2d7a64" text-anchor="middle">Newburn</text>
<text x="227.7" y="115.4" font-size="5.8" fill="#2d7a64" text-anchor="middle">Leisure</text>
<text x="227.7" y="121.3" font-size="5.8" fill="#2d7a64" text-anchor="middle">Centre</text>
<text x="295.8" y="164.1" font-size="5.8" fill="#2d7a64" text-anchor="middle">Newburn</text>
<text x="295.8" y="170.9" font-size="5.8" fill="#2d7a64" text-anchor="middle">Water</text>
<text x="295.8" y="176.7" font-size="5.8" fill="#2d7a64" text-anchor="middle">Sports</text>
<text x="295.8" y="182.5" font-size="5.8" fill="#2d7a64" text-anchor="middle">Centre</text>
<text x="236" y="229.5" font-size="5.6" fill="#444" text-anchor="middle">Parson's</text>
<text x="236" y="235.5" font-size="5.6" fill="#444" text-anchor="middle">Haugh</text>
<text x="478" y="257.5" font-size="5.6" fill="#555" text-anchor="middle">Newburn</text>
<text x="478" y="263.4" font-size="5.6" fill="#555" text-anchor="middle">Industrial</text>
<text x="478" y="269.5" font-size="5.6" fill="#555" text-anchor="middle">Estate</text>
<text x="0" y="0" font-size="5" fill="#333" text-anchor="middle" transform="translate(248 280) rotate(4)">Haugh Lane</text>
<text x="0" y="0" font-size="4.8" fill="#333" text-anchor="middle" transform="translate(288 88) rotate(-33)">Azalea Way</text>
<text x="0" y="0" font-size="4.8" fill="#333" text-anchor="middle" transform="translate(296 117) rotate(-33)">Boyd Street</text>
<text x="0" y="0" font-size="4.8" fill="#333" text-anchor="middle" transform="translate(302 130) rotate(-33)">Damson Street</text>
<text x="0" y="0" font-size="4.8" fill="#333" text-anchor="middle" transform="translate(266 122) rotate(47)">Grange Road</text>
<text x="0" y="0" font-size="4.8" fill="#333" text-anchor="middle" transform="translate(307 147) rotate(42)">Corniston Close</text>
<text x="333" y="98" font-size="4.8" fill="#333" text-anchor="middle">Park Road</text>
<text x="0" y="0" font-size="4.8" fill="#222" text-anchor="middle" transform="translate(407 36) rotate(84)">Bottle Road</text>
<text x="0" y="0" font-size="4.8" fill="#222" text-anchor="middle" transform="translate(418 31) rotate(84)">Terrace</text>
<text x="0" y="0" font-size="4.8" fill="#333" text-anchor="middle" transform="translate(316 189) rotate(22)">Water Row</text>
<text x="0" y="0" font-size="4.8" fill="#333" text-anchor="middle" transform="translate(349 197.5) rotate(15)">Station Road</text>
<text x="0" y="0" font-size="4.8" fill="#333" text-anchor="middle" transform="translate(420 220.5) rotate(5)">Shelley Road</text>
<text x="0" y="0" font-size="4.8" fill="#333" text-anchor="middle" transform="translate(466 234) rotate(42)">Shelley Road</text>
<text x="0" y="0" font-size="4.8" fill="#333" text-anchor="middle" transform="translate(531 265) rotate(20)">Knott's Road</text>
<text x="0" y="0" font-size="6.2" fill="#222" text-anchor="middle" transform="translate(588 265) rotate(17)">Lemington Road</text>
<text x="0" y="0" font-size="4.8" fill="#333" text-anchor="middle" transform="translate(565 140) rotate(-4)">Hospital Lane</text>
<text x="0" y="0" font-size="4.8" fill="#333" text-anchor="middle" transform="translate(544 174) rotate(24)">Burnham Avenue</text>
<text x="0" y="0" font-size="4.8" fill="#333" text-anchor="middle" transform="translate(611 195) rotate(15)">Burnham Avenue</text>
<text x="0" y="0" font-size="4.8" fill="#333" text-anchor="middle" transform="translate(652 173) rotate(-9)">Medburn Road</text>
<text x="0" y="0" font-size="4.8" fill="#333" text-anchor="middle" transform="translate(632 150) rotate(-40)">Carribe Drive</text>
<text x="0" y="0" font-size="4.8" fill="#333" text-anchor="middle" transform="translate(686 197) rotate(10)">Valley View</text>
<text x="0" y="0" font-size="4.8" fill="#333" text-anchor="middle" transform="translate(686 218) rotate(30)">Kirkley Road</text>
<text x="0" y="0" font-size="4.8" fill="#333" text-anchor="middle" transform="translate(675 241) rotate(-5)">Aln Grove</text>
<text x="0" y="0" font-size="6" fill="#6a8ab8" text-anchor="middle" transform="translate(297 194) rotate(28)">Tyne</text>
<text x="0" y="0" font-size="5" fill="#6a8ab8" text-anchor="middle" transform="translate(218.5 128) rotate(72)">Reigh Burn</text>
<rect x="308.5" y="70.5" width="27.1" height="10.5" rx="5.2" fill="#f6eaea" stroke="#c8808a" stroke-width="0.9"/>
<rect x="310.3" y="72.2" width="23.5" height="7.1" rx="3.5" fill="#c97880"/>
<text x="322" y="78.3" font-size="6.3" font-weight="bold" fill="#fff" text-anchor="middle" textLength="19" lengthAdjust="spacingAndGlyphs">A6085</text>
<circle cx="376.1" cy="83.9" r="5.6" fill="#8de6ec"/>
<circle cx="376.1" cy="83.9" r="3.8" fill="#5c9424" stroke="#4a7a1c" stroke-width="0.5"/>
<rect x="210.8" y="27.4" width="15.4" height="29" rx="3" fill="rgba(255,255,255,0.4)"/>
<rect x="212.1" y="28.8" width="12.8" height="12.5" rx="2.5" fill="#7090bb"/>
<rect x="212.1" y="42.3" width="12.8" height="12.9" rx="2.5" fill="#7090bb"/>
<rect x="214.9" y="34.4" width="7.2" height="1.4" fill="#fff"/><rect x="217.8" y="31.5" width="1.4" height="7.2" fill="#fff"/>
<rect x="215" y="48.2" width="7" height="1.4" fill="#fff"/>
<rect x="597" y="250" width="96" height="8" fill="rgba(255,255,255,0.15)"/>
<text x="599.1" y="255.7" font-size="6.1" fill="#333" textLength="91" lengthAdjust="spacingAndGlyphs">© <tspan fill="#1b1bd0" text-decoration="underline">OpenStreetMap</tspan> contributors</text>
</g>
<path d="M376.5 83.6 C382 85 389 90 391 104 L385 104 C385 97 382 90 376.5 84.8 Z" fill="#fff"/>
<rect x="350.4" y="103.6" width="146" height="89.2" rx="10" fill="#fff" stroke="#cfcfcf" stroke-width="0.6"/>
<text x="357.1" y="116.30" font-size="6.25" fill="#2a2a2a" textLength="71" lengthAdjust="spacingAndGlyphs">Sensor: Newburn Manor</text>
<text x="357.1" y="123.87" font-size="6.25" fill="#2a2a2a" textLength="112.7" lengthAdjust="spacingAndGlyphs">Latest Reading : 2014-10-06 11:00:00</text>
<text x="357.1" y="131.44" font-size="6.25" fill="#2a2a2a" textLength="76.2" lengthAdjust="spacingAndGlyphs">Wind Speed : 8.010 (mph)</text>
<text x="357.1" y="139.01" font-size="6.25" fill="#2a2a2a" textLength="86" lengthAdjust="spacingAndGlyphs">Temperature : 9.220 (Celsius)</text>
<text x="357.1" y="146.58" font-size="6.25" fill="#2a2a2a" textLength="93.8" lengthAdjust="spacingAndGlyphs">Wind Direction : 169.0 (Bearing)</text>
<text x="357.1" y="154.15" font-size="6.25" fill="#2a2a2a" textLength="59.4" lengthAdjust="spacingAndGlyphs">Humidity : 90.00 (%)</text>
<text x="357.1" y="161.72" font-size="6.25" fill="#2a2a2a" textLength="51.2" lengthAdjust="spacingAndGlyphs">Rain : 2.290 (mm)</text>
<text x="357.1" y="169.29" font-size="6.25" fill="#2a2a2a" textLength="64.9" lengthAdjust="spacingAndGlyphs">Pressure : 992.9 (hpa)</text>
<rect x="479.9" y="111" width="9" height="9.3" fill="#d8203e"/>
<circle cx="484.4" cy="115.65" r="3.1" fill="none" stroke="#fff" stroke-width="0.7"/>
<path d="M482.4 113.65 L486.4 117.65 M486.4 113.65 L482.4 117.65" stroke="#fff" stroke-width="0.8"/>
<text x="760.2" y="16.7" font-size="8.28" fill="#111" font-weight="bold" textLength="33.5" lengthAdjust="spacingAndGlyphs" >Themes</text>
<text x="857.3" y="16.5" font-size="8.28" fill="#111" font-weight="bold" textLength="30.7" lengthAdjust="spacingAndGlyphs" >Legend</text>
<text x="723.8" y="27.3" font-size="8.28" fill="#222" textLength="18.0" lengthAdjust="spacingAndGlyphs" >View</text>
<text x="702.7" y="41.9" font-size="8.28" fill="#222" textLength="18.4" lengthAdjust="spacingAndGlyphs" >None</text>
<circle cx="731.9" cy="39.3" r="4.3" fill="#e8734f" stroke="#c86040" stroke-width="0.6"/>
<circle cx="731.9" cy="39.3" r="1.2" fill="#5a2a1a"/>
<rect x="700.8" y="48.6" width="144.6" height="16.5" rx="5" fill="#dadada" stroke="#666" stroke-width="0.9"/>
<text x="704.0" y="59.8" font-size="8.28" fill="#222" textLength="40.0" lengthAdjust="spacingAndGlyphs" >Air Quality</text>
<circle cx="838.3" cy="56.9" r="3.4" fill="#111"/>
<path d="M836.5 55.95 L840.0999999999999 55.95 L838.3 58.15 Z" fill="#fff"/>
<text x="702.7" y="77.1" font-size="8.28" fill="#222" textLength="74.7" lengthAdjust="spacingAndGlyphs" >Pm10 Concentration</text>
<circle cx="791" cy="75.0" r="4.4" fill="#fff" stroke="#999" stroke-width="0.8"/>
<text x="702.7" y="94.2" font-size="8.28" fill="#222" textLength="70.8" lengthAdjust="spacingAndGlyphs" >NO2 Concentration</text>
<circle cx="791" cy="92.1" r="4.4" fill="#fff" stroke="#999" stroke-width="0.8"/>
<text x="702.7" y="111.2" font-size="8.28" fill="#222" textLength="77.0" lengthAdjust="spacingAndGlyphs" >Pm2.5 Concentration</text>
<circle cx="791" cy="109.1" r="4.4" fill="#fff" stroke="#999" stroke-width="0.8"/>
<text x="702.7" y="128.8" font-size="8.28" fill="#222" textLength="77.6" lengthAdjust="spacingAndGlyphs" >Ozone Concentration</text>
<circle cx="791" cy="126.7" r="4.4" fill="#fff" stroke="#999" stroke-width="0.8"/>
<text x="702.7" y="145.7" font-size="8.28" fill="#222" textLength="69.6" lengthAdjust="spacingAndGlyphs" >SO2 Concentration</text>
<circle cx="791" cy="143.6" r="4.4" fill="#fff" stroke="#999" stroke-width="0.8"/>
<rect x="700.8" y="203.8" width="144.6" height="15.9" rx="5" fill="#dadada" stroke="#666" stroke-width="0.9"/>
<text x="704.0" y="214.7" font-size="8.28" fill="#222" textLength="22.0" lengthAdjust="spacingAndGlyphs" >Traffic</text>
<circle cx="838.3" cy="211.8" r="3.4" fill="#111"/>
<path d="M837.4 209.95 L837.4 213.55 L839.5999999999999 211.75 Z" fill="#fff"/>
<rect x="700.8" y="221.3" width="144.6" height="15.6" rx="5" fill="#dadada" stroke="#666" stroke-width="0.9"/>
<text x="704.0" y="232.0" font-size="8.28" fill="#222" textLength="30.0" lengthAdjust="spacingAndGlyphs" >Weather</text>
<circle cx="838.3" cy="229.1" r="3.4" fill="#111"/>
<path d="M837.4 227.29999999999998 L837.4 230.9 L839.5999999999999 229.1 Z" fill="#fff"/>
<rect x="700.8" y="238.1" width="144.6" height="15.6" rx="5" fill="#dadada" stroke="#666" stroke-width="0.9"/>
<text x="704.0" y="248.8" font-size="8.28" fill="#222" textLength="46.0" lengthAdjust="spacingAndGlyphs" >Environment</text>
<circle cx="838.3" cy="245.9" r="3.4" fill="#111"/>
<path d="M837.4 244.1 L837.4 247.70000000000002 L839.5999999999999 245.9 Z" fill="#fff"/>
<rect x="700.8" y="255.3" width="144.6" height="15.9" rx="5" fill="#dadada" stroke="#666" stroke-width="0.9"/>
<text x="704.0" y="266.1" font-size="8.28" fill="#222" textLength="24.0" lengthAdjust="spacingAndGlyphs" >Human</text>
<circle cx="838.3" cy="263.2" r="3.4" fill="#111"/>
<path d="M837.4 261.45 L837.4 265.05 L839.5999999999999 263.25 Z" fill="#fff"/>
<text x="859.0" y="29.6" font-size="8.58" fill="#222" textLength="53.0" lengthAdjust="spacingAndGlyphs" >Environmental</text>
<circle cx="955.8" cy="27.3" r="5.2" fill="#33ee22" stroke="#222" stroke-width="0.8"/>
<text x="859.0" y="42.9" font-size="8.58" fill="#222" textLength="28.0" lengthAdjust="spacingAndGlyphs" >Parking</text>
<circle cx="955.8" cy="41" r="5.2" fill="#3a9090" stroke="#222" stroke-width="0.8"/>
<text x="859.0" y="56.8" font-size="8.58" fill="#222" textLength="40.0" lengthAdjust="spacingAndGlyphs" >Air Quality</text>
<circle cx="955.8" cy="54.7" r="5.2" fill="#2222a0" stroke="#222" stroke-width="0.8"/>
<text x="859.0" y="70.5" font-size="8.58" fill="#222" textLength="30.5" lengthAdjust="spacingAndGlyphs" >Weather</text>
<circle cx="955.8" cy="68.2" r="5.2" fill="#5a8a22" stroke="#222" stroke-width="0.8"/>
<text x="859.0" y="82.8" font-size="8.58" fill="#222" textLength="68.5" lengthAdjust="spacingAndGlyphs" >Metro - delay:None</text>
<rect x="950.4" y="78.8" width="11.3" height="3.4" fill="#33ff33"/>
<text x="859.0" y="94.1" font-size="8.58" fill="#222" textLength="70.0" lengthAdjust="spacingAndGlyphs" >Metro - delay:Minor</text>
<rect x="950.4" y="90.1" width="11.3" height="3.4" fill="#ffff00"/>
<text x="859.0" y="106.0" font-size="8.58" fill="#222" textLength="70.0" lengthAdjust="spacingAndGlyphs" >Metro - delay:Major</text>
<rect x="950.4" y="102.3" width="11.3" height="3.4" fill="#ff8000"/>
<text x="859.0" y="117.0" font-size="8.58" fill="#222" textLength="88.6" lengthAdjust="spacingAndGlyphs" >Metro - delay:No Service</text>
<rect x="950.4" y="113.5" width="11.3" height="3.4" fill="#ff0000"/>
<text x="4.9" y="310.8" font-size="8.14" fill="#dddddd" font-weight="bold" textLength="50.5" lengthAdjust="spacingAndGlyphs" >Sensor Data</text>
<text x="7.0" y="322.8" font-size="7.99" fill="#c8c8c8" textLength="50.0" lengthAdjust="spacingAndGlyphs" >Last Updated:</text>
<text x="91.0" y="322.8" font-size="7.99" fill="#c8c8c8" textLength="74.8" lengthAdjust="spacingAndGlyphs" >2014-10-06 13:05:00</text>
<text x="7.0" y="333.7" font-size="7.99" fill="#c8c8c8" textLength="80.9" lengthAdjust="spacingAndGlyphs" >Last Record Recieved:</text>
<text x="91.0" y="333.7" font-size="7.99" fill="#c8c8c8" textLength="74.8" lengthAdjust="spacingAndGlyphs" >2014-10-06 13:03:57</text>
<path d="M206.2 310 V299 A4 4 0 0 1 210.2 295 H249.6 A4 4 0 0 1 253.6 299 V310 Z" fill="#363636"/>
<text x="210.0" y="305.2" font-size="8.28" fill="#7c7c7c" textLength="39.2" lengthAdjust="spacingAndGlyphs" >Global Info</text>
<path d="M258 310 V299 A4 4 0 0 1 262 295 H301.1 A4 4 0 0 1 305.1 299 V310 Z" fill="#363636"/>
<text x="261.0" y="305.2" font-size="8.28" fill="#7c7c7c" textLength="42.7" lengthAdjust="spacingAndGlyphs" >Wind Speed</text>
<path d="M309.3 310 V299 A4 4 0 0 1 313.3 295 H354.2 A4 4 0 0 1 358.2 299 V310 Z" fill="#363636"/>
<text x="311.6" y="305.2" font-size="8.28" fill="#7c7c7c" textLength="44.8" lengthAdjust="spacingAndGlyphs" >Temperature</text>
<path d="M361.7 310 V299 A4 4 0 0 1 365.7 295 H414.6 A4 4 0 0 1 418.6 299 V310 Z" fill="#363636"/>
<text x="363.7" y="305.2" font-size="8.28" fill="#7c7c7c" textLength="53.3" lengthAdjust="spacingAndGlyphs" >Wind Direction</text>
<path d="M420.3 310 V299 A4 4 0 0 1 424.3 295 H464.2 A4 4 0 0 1 468.2 299 V310 Z" fill="#363636"/>
<text x="423.6" y="305.2" font-size="8.28" fill="#7c7c7c" textLength="33.1" lengthAdjust="spacingAndGlyphs" >Humidity</text>
<path d="M470 310 V299 A4 4 0 0 1 474 295 H514 A4 4 0 0 1 518 299 V310 Z" fill="#3c3c3c"/>
<text x="472.8" y="305.2" font-size="8.28" fill="#e6e6e6" textLength="16.7" lengthAdjust="spacingAndGlyphs" >Rain</text>
<path d="M519.3 310 V299 A4 4 0 0 1 523.3 295 H561.8 A4 4 0 0 1 565.8 299 V310 Z" fill="#363636"/>
<text x="522.3" y="305.2" font-size="8.28" fill="#7c7c7c" textLength="31.5" lengthAdjust="spacingAndGlyphs" >Pressure</text>
<rect x="242" y="438.00" width="687" height="1" fill="#4b4b4b"/>
<rect x="242" y="414.95" width="687" height="1" fill="#4b4b4b"/>
<rect x="242" y="391.90" width="687" height="1" fill="#4b4b4b"/>
<rect x="242" y="368.85" width="687" height="1" fill="#4b4b4b"/>
<rect x="242" y="345.80" width="687" height="1" fill="#4b4b4b"/>
<rect x="242" y="460.6" width="687" height="1.2" fill="#6e6e6e"/>
<rect x="247.80" y="461" width="1" height="4" fill="#6e6e6e"/>
<text x="248.3" y="469.6" font-size="7.27" fill="#a0a0a0" text-anchor="middle" >14:00</text>
<rect x="311.96" y="461" width="1" height="4" fill="#6e6e6e"/>
<text x="312.5" y="469.6" font-size="7.27" fill="#a0a0a0" text-anchor="middle" >16:00</text>
<rect x="376.12" y="461" width="1" height="4" fill="#6e6e6e"/>
<text x="376.6" y="469.6" font-size="7.27" fill="#a0a0a0" text-anchor="middle" >18:00</text>
<rect x="440.28" y="461" width="1" height="4" fill="#6e6e6e"/>
<text x="440.8" y="469.6" font-size="7.27" fill="#a0a0a0" text-anchor="middle" >20:00</text>
<rect x="504.44" y="461" width="1" height="4" fill="#6e6e6e"/>
<text x="504.9" y="469.6" font-size="7.27" fill="#a0a0a0" text-anchor="middle" >22:00</text>
<rect x="568.60" y="461" width="1" height="4" fill="#6e6e6e"/>
<text x="569.1" y="469.6" font-size="7.27" fill="#a0a0a0" text-anchor="middle" >6 Oct</text>
<rect x="632.76" y="461" width="1" height="4" fill="#6e6e6e"/>
<text x="633.3" y="469.6" font-size="7.27" fill="#a0a0a0" text-anchor="middle" >02:00</text>
<rect x="696.92" y="461" width="1" height="4" fill="#6e6e6e"/>
<text x="697.4" y="469.6" font-size="7.27" fill="#a0a0a0" text-anchor="middle" >04:00</text>
<rect x="761.08" y="461" width="1" height="4" fill="#6e6e6e"/>
<text x="761.6" y="469.6" font-size="7.27" fill="#a0a0a0" text-anchor="middle" >06:00</text>
<rect x="825.24" y="461" width="1" height="4" fill="#6e6e6e"/>
<text x="825.7" y="469.6" font-size="7.27" fill="#a0a0a0" text-anchor="middle" >08:00</text>
<rect x="889.40" y="461" width="1" height="4" fill="#6e6e6e"/>
<text x="889.9" y="469.6" font-size="7.27" fill="#a0a0a0" text-anchor="middle" >10:00</text>
<text x="237.5" y="463.7" font-size="6.40" fill="#a8a8a8" font-weight="bold" text-anchor="end" >-1</text>
<text x="237.5" y="440.6" font-size="6.40" fill="#a8a8a8" font-weight="bold" text-anchor="end" >0</text>
<text x="237.5" y="417.6" font-size="6.40" fill="#a8a8a8" font-weight="bold" text-anchor="end" >1</text>
<text x="237.5" y="394.5" font-size="6.40" fill="#a8a8a8" font-weight="bold" text-anchor="end" >2</text>
<text x="237.5" y="371.5" font-size="6.40" fill="#a8a8a8" font-weight="bold" text-anchor="end" >3</text>
<text x="237.5" y="348.4" font-size="6.40" fill="#a8a8a8" font-weight="bold" text-anchor="end" >4</text>
<text x="0" y="0" font-size="8.2" font-weight="bold" fill="#aaaaaa" text-anchor="middle" transform="translate(224.2 403.4) rotate(-90)" textLength="44" lengthAdjust="spacingAndGlyphs">Rain (mm)</text>
<text x="612.2" y="327.4" font-size="9.30" fill="#e4e4e4" text-anchor="middle" textLength="21.3" lengthAdjust="spacingAndGlyphs" >Rain</text>
<text x="612.1" y="336.6" font-size="8.58" fill="#d4d4d4" text-anchor="middle" textLength="114.2" lengthAdjust="spacingAndGlyphs" >Rain data from Newburn Manor</text>
<path d="M248.30 438.10 C248.30 438.10 267.55 438.10 280.38 438.10 C293.21 438.10 299.63 438.10 312.46 438.10 C325.29 438.10 331.71 438.10 344.54 438.10 C357.37 438.10 363.79 438.10 376.62 438.10 C389.45 438.10 395.87 438.10 408.70 438.10 C421.53 438.10 427.95 438.10 440.78 438.10 C453.61 438.10 460.03 438.10 472.86 438.10 C485.69 438.10 492.11 438.10 504.94 438.10 C517.77 438.10 524.19 438.10 537.02 438.10 C549.85 438.10 556.27 438.10 569.10 438.10 C581.93 438.10 588.35 438.10 601.18 438.10 C614.01 438.10 620.43 438.10 633.26 438.10 C646.09 438.10 652.51 438.10 665.34 438.10 C678.17 438.10 684.59 438.10 697.42 438.10 C703.84 438.10 707.04 438.10 713.46 438.10 C732.71 438.10 742.33 438.10 761.58 438.10 C774.41 438.10 780.83 385.02 793.66 373.27 C806.49 361.51 812.91 361.51 825.74 361.51 C838.57 361.51 844.99 367.37 857.82 373.27 C870.65 379.17 877.07 391.02 889.90 391.02 C902.73 391.02 921.98 385.02 921.98 385.02" fill="none" stroke="#c4c41c" stroke-width="2.0"/>
<circle cx="248.30" cy="438.10" r="2.6" fill="#e4e414"/>
<circle cx="280.38" cy="438.10" r="2.6" fill="#e4e414"/>
<circle cx="312.46" cy="438.10" r="2.6" fill="#e4e414"/>
<circle cx="344.54" cy="438.10" r="2.6" fill="#e4e414"/>
<circle cx="376.62" cy="438.10" r="2.6" fill="#e4e414"/>
<circle cx="408.70" cy="438.10" r="2.6" fill="#e4e414"/>
<circle cx="440.78" cy="438.10" r="2.6" fill="#e4e414"/>
<circle cx="472.86" cy="438.10" r="2.6" fill="#e4e414"/>
<circle cx="504.94" cy="438.10" r="2.6" fill="#e4e414"/>
<circle cx="537.02" cy="438.10" r="2.6" fill="#e4e414"/>
<circle cx="569.10" cy="438.10" r="2.6" fill="#e4e414"/>
<circle cx="601.18" cy="438.10" r="2.6" fill="#e4e414"/>
<circle cx="633.26" cy="438.10" r="2.6" fill="#e4e414"/>
<circle cx="665.34" cy="438.10" r="2.6" fill="#e4e414"/>
<circle cx="697.42" cy="438.10" r="2.6" fill="#e4e414"/>
<circle cx="713.46" cy="438.10" r="2.6" fill="#e4e414"/>
<circle cx="761.58" cy="438.10" r="2.6" fill="#e4e414"/>
<circle cx="793.66" cy="373.27" r="2.6" fill="#e4e414"/>
<circle cx="825.74" cy="361.51" r="2.6" fill="#e4e414"/>
<circle cx="857.82" cy="373.27" r="2.6" fill="#e4e414"/>
<circle cx="889.90" cy="391.02" r="2.6" fill="#e4e414"/>
<circle cx="921.98" cy="385.02" r="2.6" fill="#e4e414"/>
<rect x="939" y="395.5" width="11" height="1.6" fill="#e3e31c"/><circle cx="944.5" cy="396.3" r="2.3" fill="#e3e31c"/>
<text x="952.8" y="399.0" font-size="8.14" fill="#cfcfcf" textLength="57.0" lengthAdjust="spacingAndGlyphs" >Newburn Manor</text>
<rect x="995.5" y="318.3" width="15.2" height="14.2" rx="2" fill="#2a2a2a" stroke="#1e1e1e" stroke-width="0.6"/>
<rect x="997.2" y="319.5" width="11.8" height="12" rx="1.5" fill="#4a4a4a"/>
<rect x="998.8" y="322.2" width="8.6" height="1.8" fill="#f0f0f0"/>
<rect x="998.8" y="325.2" width="8.6" height="1.8" fill="#f0f0f0"/>
<rect x="998.8" y="328.2" width="8.6" height="1.8" fill="#f0f0f0"/>
</svg>
</body></html>
